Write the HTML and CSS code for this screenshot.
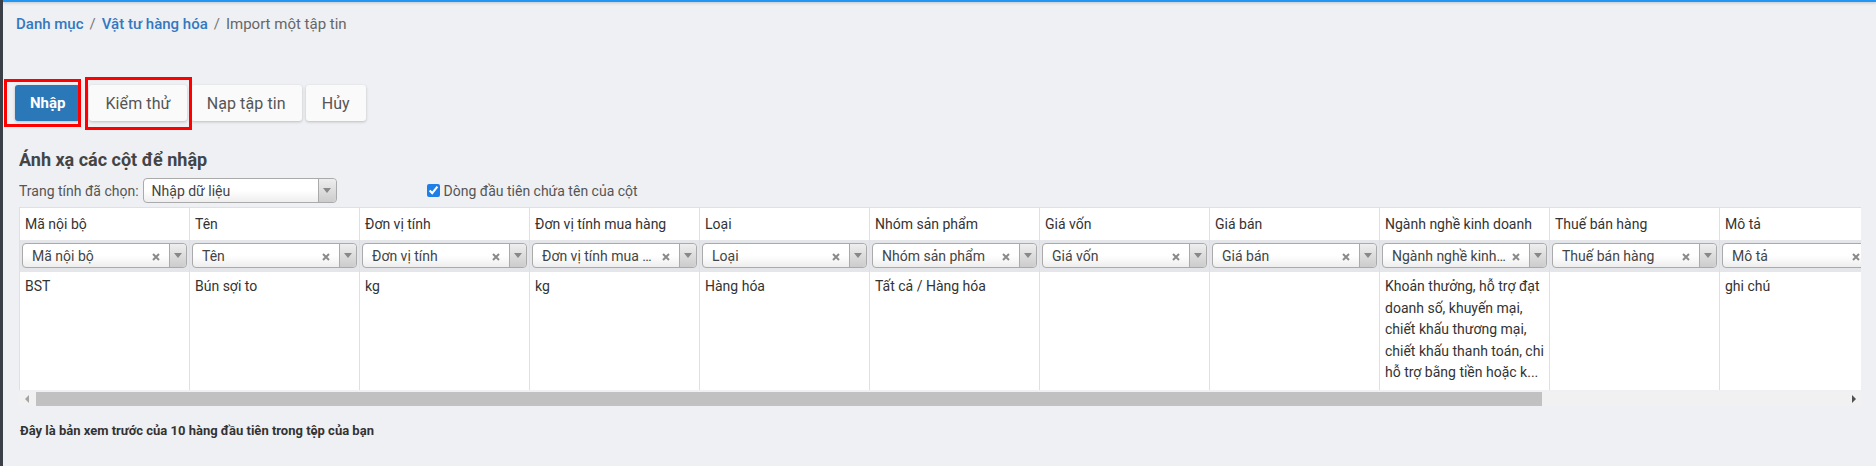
FILE: index.html
```html
<!DOCTYPE html>
<html lang="vi">
<head>
<meta charset="utf-8">
<title>Import một tập tin</title>
<link rel="stylesheet" href="styles.css">
</head>
<body>
<div class="app">
  <div class="sidebar"></div>
  <div class="main">
    <div class="topbar"></div>
    <div class="content">
      <nav class="crumbs">
        <a href="#">Danh mục</a><span class="sep">/</span><a href="#">Vật tư hàng hóa</a><span class="sep">/</span><span class="cur">Import một tập tin</span>
      </nav>

      <div class="actions">
        <button class="btn primary">Nhập</button>
        <button class="btn test">Kiểm thử</button>
        <button class="btn">Nạp tập tin</button>
        <button class="btn">Hủy</button>
        <span class="mark mark-a"></span>
        <span class="mark mark-b"></span>
      </div>

      <section class="mapping">
        <h2 class="title">Ánh xạ các cột để nhập</h2>
        <div class="options">
          <span class="opt-label">Trang tính đã chọn:</span>
          <div class="sheet-select"><span class="val">Nhập dữ liệu</span><span class="arr"></span></div>
          <label class="chk"><input type="checkbox" checked><span>Dòng đầu tiên chứa tên của cột</span></label>
        </div>

        <div class="grid-wrap">
          <div class="grid">
            <div class="hcell">Mã nội bộ</div>
            <div class="hcell">Tên</div>
            <div class="hcell">Đơn vị tính</div>
            <div class="hcell">Đơn vị tính mua hàng</div>
            <div class="hcell">Loại</div>
            <div class="hcell">Nhóm sản phẩm</div>
            <div class="hcell">Giá vốn</div>
            <div class="hcell">Giá bán</div>
            <div class="hcell">Ngành nghề kinh doanh</div>
            <div class="hcell">Thuế bán hàng</div>
            <div class="hcell">Mô tả</div>

            <div class="scell"><div class="sel"><span class="val">Mã nội bộ</span><span class="clr"><svg width="8" height="8" viewBox="0 0 8 8"><path d="M1 1L7 7M7 1L1 7"/></svg></span><span class="arr"></span></div></div>
            <div class="scell"><div class="sel"><span class="val">Tên</span><span class="clr"><svg width="8" height="8" viewBox="0 0 8 8"><path d="M1 1L7 7M7 1L1 7"/></svg></span><span class="arr"></span></div></div>
            <div class="scell"><div class="sel"><span class="val">Đơn vị tính</span><span class="clr"><svg width="8" height="8" viewBox="0 0 8 8"><path d="M1 1L7 7M7 1L1 7"/></svg></span><span class="arr"></span></div></div>
            <div class="scell"><div class="sel"><span class="val">Đơn vị tính mua hàng</span><span class="clr"><svg width="8" height="8" viewBox="0 0 8 8"><path d="M1 1L7 7M7 1L1 7"/></svg></span><span class="arr"></span></div></div>
            <div class="scell"><div class="sel"><span class="val">Loại</span><span class="clr"><svg width="8" height="8" viewBox="0 0 8 8"><path d="M1 1L7 7M7 1L1 7"/></svg></span><span class="arr"></span></div></div>
            <div class="scell"><div class="sel"><span class="val">Nhóm sản phẩm</span><span class="clr"><svg width="8" height="8" viewBox="0 0 8 8"><path d="M1 1L7 7M7 1L1 7"/></svg></span><span class="arr"></span></div></div>
            <div class="scell"><div class="sel"><span class="val">Giá vốn</span><span class="clr"><svg width="8" height="8" viewBox="0 0 8 8"><path d="M1 1L7 7M7 1L1 7"/></svg></span><span class="arr"></span></div></div>
            <div class="scell"><div class="sel"><span class="val">Giá bán</span><span class="clr"><svg width="8" height="8" viewBox="0 0 8 8"><path d="M1 1L7 7M7 1L1 7"/></svg></span><span class="arr"></span></div></div>
            <div class="scell"><div class="sel"><span class="val">Ngành nghề kinh doanh</span><span class="clr"><svg width="8" height="8" viewBox="0 0 8 8"><path d="M1 1L7 7M7 1L1 7"/></svg></span><span class="arr"></span></div></div>
            <div class="scell"><div class="sel"><span class="val">Thuế bán hàng</span><span class="clr"><svg width="8" height="8" viewBox="0 0 8 8"><path d="M1 1L7 7M7 1L1 7"/></svg></span><span class="arr"></span></div></div>
            <div class="scell"><div class="sel"><span class="val">Mô tả</span><span class="clr"><svg width="8" height="8" viewBox="0 0 8 8"><path d="M1 1L7 7M7 1L1 7"/></svg></span><span class="arr"></span></div></div>

            <div class="dcell">BST</div>
            <div class="dcell">Bún sợi to</div>
            <div class="dcell">kg</div>
            <div class="dcell">kg</div>
            <div class="dcell">Hàng hóa</div>
            <div class="dcell">Tất cả / Hàng hóa</div>
            <div class="dcell"></div>
            <div class="dcell"></div>
            <div class="dcell"><div class="clamp">Khoản thưởng, hỗ trợ đạt doanh số, khuyến mại, chiết khấu thương mại, chiết khấu thanh toán, chi hỗ trợ bằng tiền hoặc k...</div></div>
            <div class="dcell"></div>
            <div class="dcell">ghi chú</div>
          </div>
          <div class="hscroll">
            <span class="sarrow left"></span>
            <div class="track"><div class="thumb"></div></div>
            <span class="sarrow right"></span>
          </div>
        </div>

        <p class="note">Đây là bản xem trước của 10 hàng đầu tiên trong tệp của bạn</p>
      </section>
    </div>
  </div>
</div>
</body>
</html>
```

FILE: styles.css
```css
* { box-sizing: border-box; }
html, body { margin: 0; height: 100%; }
body {
  background: #eef0f4;
  font-family: Roboto, "Noto Sans", "Liberation Sans", sans-serif;
  color: #333;
  overflow: hidden;
}
.app { display: flex; min-height: 466px; }
.sidebar { width: 3px; flex: none; background: #3b4048; }
.main { flex: 1; min-width: 0; }
.topbar {
  height: 2px;
  background: #2196f3;
  box-shadow: 0 1px 3px rgba(0, 0, 0, 0.22);
  position: relative;
}
.content { padding: 12px 0 0 12px; }

.crumbs { font-size: 15px; line-height: 20px; padding-left: 1px; }
.crumbs a { color: #3378c0; font-weight: 500; text-decoration: none; }
.crumbs .sep { color: #777; margin: 0 6px; }
.crumbs .cur { color: #666; }

.actions {
  position: relative;
  display: flex;
  gap: 4px;
  margin-top: 51px;
}
.btn {
  height: 36px;
  padding: 0 16px;
  border: none;
  border-radius: 3px;
  background: #fafafa;
  color: #555;
  font-family: inherit;
  font-size: 16px;
  letter-spacing: 0.1px;
  box-shadow: 0 1px 3px rgba(0, 0, 0, 0.22);
}
.btn.primary {
  background: #2b78b9; color: #fff; font-weight: 700;
  font-size: 15px; letter-spacing: 0; padding: 0 15px; margin-right: 5px;
}
.mark {
  position: absolute;
  border: 3px solid #f00;
  pointer-events: none;
}
.mark-a { left: -11px; top: -6px; width: 77px; height: 48px; }
.mark-b { left: 70px; top: -8px; width: 107px; height: 53px; }

.mapping { padding: 0 15px 0 4px; margin-top: 27px; }
.title { margin: 0; font-size: 18px; line-height: 24px; font-weight: 700; color: #444; }

.options { display: flex; align-items: center; margin-top: 6px; height: 25px; }
.opt-label { font-size: 14px; color: #555; }
.sheet-select {
  display: flex; align-items: center;
  width: 194px; height: 25px; margin-left: 4px;
  border: 1px solid #aaa; border-radius: 4px;
  background: linear-gradient(#fff 50%, #eee);
  font-size: 14px; color: #444;
}
.sheet-select .val { flex: 1; padding-left: 8px; }
.arr {
  align-self: stretch;
  width: 18px;
  display: flex; align-items: center; justify-content: center;
  border-left: 1px solid #aaa;
  border-radius: 0 4px 4px 0;
  background: linear-gradient(#eee, #ccc);
}
.arr::before {
  content: "";
  border-left: 4px solid transparent;
  border-right: 4px solid transparent;
  border-top: 5px solid #888;
}
.chk { display: flex; align-items: center; margin-left: 90px; font-size: 14px; color: #555; }
.chk input { margin: 0 4px 0 0; width: 13px; height: 13px; accent-color: #1f7fe8; }

.grid-wrap { margin-top: 4px; overflow: hidden; }
.grid {
  display: grid;
  grid-template-columns: repeat(11, 170px);
  width: max-content;
}
.hcell {
  height: 33px;
  padding: 0 5px;
  line-height: 32px;
  font-size: 14px;
  color: #333;
  background: #fff;
  border-top: 1px solid #dde0e5;
  border-left: 1px solid #dde0e5;
  white-space: nowrap;
}
.scell {
  padding: 3px 2px 4px;
  background: #e4e6ea;
  border-left: 1px solid #dde0e5;
}
.sel {
  display: flex; align-items: center;
  height: 25px;
  border: 1px solid #aaa; border-radius: 4px;
  background: linear-gradient(#fff 50%, #eee);
  font-size: 14px; color: #444;
}
.sel .val { flex: 1; min-width: 0; padding-left: 9px; white-space: nowrap; overflow: hidden; text-overflow: ellipsis; }
.sel .clr { display: flex; width: 8px; margin: 2px 9px 0 6px; }
.sel .clr path { stroke: #8a8a8a; stroke-width: 2; }
.sel .arr { width: 17px; }

.dcell {
  height: 118px;
  padding: 4px 5px 5px;
  font-size: 14px;
  line-height: 21.5px;
  color: #333;
  background: #fff;
  border-left: 1px solid #dde0e5;
}
.clamp {
  display: -webkit-box;
  -webkit-box-orient: vertical;
  -webkit-line-clamp: 5;
  overflow: hidden;
}

.hscroll { display: flex; align-items: center; height: 14px; margin-top: 2px; background: #f1f1f1; }
.sarrow { width: 15px; display: flex; justify-content: center; }
.sarrow.left::before { content: ""; border-top: 4px solid transparent; border-bottom: 4px solid transparent; border-right: 4px solid #a3a3a3; }
.sarrow.right::before { content: ""; border-top: 4px solid transparent; border-bottom: 4px solid transparent; border-left: 4px solid #505050; }
.track { flex: 1; height: 100%; }
.thumb { width: 1506px; height: 100%; margin-left: 2px; background: #c1c1c1; }

.note { margin: 17px 0 0 1px; font-size: 13px; font-weight: 700; color: #333; }
```
